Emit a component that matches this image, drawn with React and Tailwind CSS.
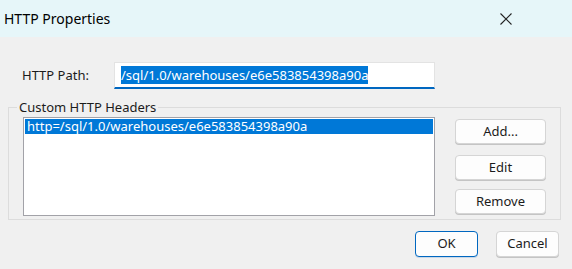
import React from "react";

function Btn({ children, primary }) {
  return (
    <button
      className={
        primary
          ? "w-[63px] h-[26px] rounded-[4px] bg-[#fdfdfd] border border-[#0067c0] text-[13px] text-[#1b1b1b] shadow-[0_1px_0_#c9d8e8]"
          : "w-[63px] h-[26px] rounded-[4px] bg-[#fdfdfd] border border-[#d5d5d5] text-[13px] text-[#1b1b1b] shadow-[0_1px_0_#c4c4c4]"
      }
    >
      {children}
    </button>
  );
}

function SideBtn({ children, className = "" }) {
  return (
    <button className={"w-[91px] h-[25px] rounded-[4px] bg-[#fdfdfd] border border-[#d5d5d5] text-[13px] text-[#1b1b1b] shadow-[0_1px_0_#c4c4c4] " + className}>
      {children}
    </button>
  );
}

export default function App() {
  return (
    <div className="w-[572px] h-[269px] bg-[#f0f0f0] font-['Noto_Sans',sans-serif] text-[#1b1b1b] overflow-hidden">
      {/* title bar */}
      <div className="h-[37px] bg-[#e6f6f9] flex items-center pl-[4px]">
        <span className="text-[14px] text-black">HTTP Properties</span>
        <svg className="ml-auto mr-[60px]" width="12" height="12" viewBox="0 0 12 12">
          <path d="M0.5 0.5 L11.5 11.5 M11.5 0.5 L0.5 11.5" stroke="#222" strokeWidth="1.1" fill="none" />
        </svg>
      </div>

      {/* path row */}
      <div className="flex items-center mt-[25px]">
        <span className="w-[114px] pl-[22px] text-[13px]">HTTP Path:</span>
        <div className="w-[321px] h-[27px] bg-white border border-[#e3e3e3] border-b-2 border-b-[#0067c0] flex items-center pl-[6px]">
          <span className="bg-[#0078d7] text-white text-[13px] leading-[18px]">/sql/1.0/warehouses/e6e583854398a90a</span>
        </div>
      </div>

      {/* group box */}
      <div className="relative mt-[18px] ml-[8px] w-[553px] h-[113px] border border-[#dcdcdc] flex pl-[14px] pt-[9px]">
        <span className="absolute -top-[10px] left-[8px] px-[2px] bg-[#f0f0f0] text-[13px] leading-[18px]">
          Custom HTTP Headers
        </span>
        <div className="w-[412px] h-[99px] bg-white border border-[#a2a2a8] p-[1px]">
          <div className="bg-[#0078d7] text-white text-[13px] leading-[15px] pl-[2px]">
            http=/sql/1.0/warehouses/e6e583854398a90a
          </div>
        </div>
        <div className="ml-[20px] mt-[2px] flex flex-col">
          <SideBtn>Add...</SideBtn>
          <SideBtn className="mt-[11px]">Edit</SideBtn>
          <SideBtn className="mt-[9px]">Remove</SideBtn>
        </div>
      </div>

      {/* footer */}
      <div className="flex mt-[11px] pl-[415px] gap-[18px]">
        <Btn primary>OK</Btn>
        <Btn>Cancel</Btn>
      </div>
    </div>
  );
}
